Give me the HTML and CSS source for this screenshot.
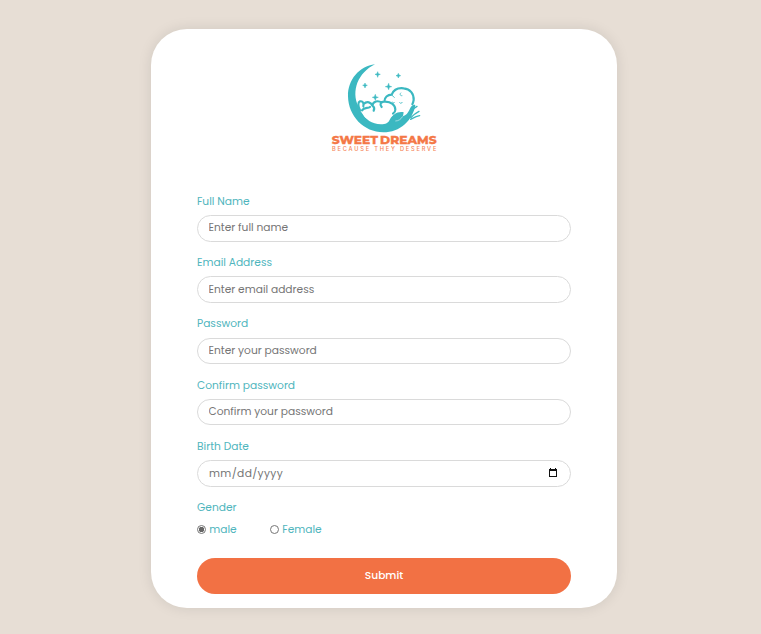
FILE: index.html
```html
<!DOCTYPE html>
<html lang="en">
<head>
<meta charset="utf-8">
<title>Sweet Dreams</title>
<link rel="stylesheet" href="styles.css">
</head>
<body>
<main class="card">
  <svg class="logo" viewBox="0 0 360 300" role="img" aria-label="Sweet Dreams">
    <path class="teal" d="M153 25C105 31 71 72 72 121C73 180 119 229 178 229C228 229 266 194 274 147C266 144 260 153 256 162C252 171 246 178 237 181L239 169C221 165 205 176 198 190C193 202 185 205 171 205C143 203 124 191 116 170L103 151C81 105 102 50 153 25Z"/>
    <path class="notch" d="M214 195C223 195 231 190 236 181"/>
    <path class="body" d="M108 163C102 151 101 139 108 136C114 134 117 139 119 144C123 133 137 136 145 149C148 138 162 133 174 139C184 134 202 138 209 149C216 160 214 170 208 176C200 182 197 187 192 192C177 201 136 197 122 183Z"/>
    <path class="line" d="M108 163C102 151 101 139 108 136C117 134 120 142 118 151M119 144C129 134 142 139 145 149M114 163C120 153 132 158 138 153M145 149C147 136 162 132 173 140M145 149C151 153 152 158 149 164M173 153C166 144 170 137 181 137C202 136 214 148 214 161C214 166 211 170 207 173M181 137C181 124 191 116 203 116C209 101 223 95 239 97C259 99 270 114 269 132C268 138 267 141 265 145"/>
    <path class="thin" d="M204 118L212 125M231 110C226 115 229 120 235 119M205 137C207 142 210 142 212 138M226 139C229 143 233 143 235 138"/>
    <path class="finger" d="M257 178C260 166 267 158 279 151M260 185C267 178 275 171 285 166M260 190C269 185 277 180 287 179"/>
    <path class="teal star" d="M161 47L163 53L169 55L163 57L161 64L159 57L153 55L159 53ZM223 52L225 57L230 59L225 61L223 66L221 61L216 59L221 57ZM123 81L125 86L130 88L125 90L123 96L121 90L116 88L121 86ZM194 82L196 90L203 92L196 94L194 101L191 94L184 92L191 90ZM154 115L156 122L163 124L156 126L154 133L151 126L145 124L151 122Z"/>
    <text class="brand" x="23" y="264" textLength="315" lengthAdjust="spacingAndGlyphs">SWEET DREAMS</text>
    <text class="tagline" x="24" y="286" textLength="313">BECAUSE THEY DESERVE</text>
  </svg>
  <form class="form">
    <div class="field"><label for="n">Full Name</label><input id="n" placeholder="Enter full name"></div>
    <div class="field"><label for="e">Email Address</label><input id="e" placeholder="Enter email address"></div>
    <div class="field"><label for="p">Password</label><input id="p" placeholder="Enter your password"></div>
    <div class="field"><label for="c">Confirm password</label><input id="c" placeholder="Confirm your password"></div>
    <div class="field">
      <label for="b">Birth Date</label>
      <div class="date">
        <input id="b" placeholder="mm/dd/yyyy">
        <svg class="calendar" viewBox="0 0 8 9"><path d="M0 1h1V0h1v1h4V0h1v1h1v8H0ZM1 3v5h6V3Z" fill="#111" fill-rule="evenodd"/></svg>
      </div>
    </div>
    <div class="gender">
      <span class="label">Gender</span>
      <div class="options">
        <label class="option"><input type="radio" name="g" checked><span>male</span></label>
        <label class="option"><input type="radio" name="g"><span>Female</span></label>
      </div>
    </div>
    <button class="submit" type="button">Submit</button>
  </form>
</main>
</body>
</html>
```
FILE: styles.css
```css
* { box-sizing: border-box; }
body {
  margin: 0;
  height: 634px;
  padding: 29px 0 0 151px;
  background: #e7ded5;
  font-family: Poppins, Inter, sans-serif;
  font-size: 10.67px;
  color: #4fb5bd;
}
.card {
  width: 466px;
  height: 579px;
  padding: 27px 46px 14px;
  border-radius: 36px;
  background: #fff;
  box-shadow: 0 0 14px rgba(0, 0, 0, .1);
}
.logo { display: block; width: 120px; height: 100px; margin: 0 auto 37px 127px; }
.teal { fill: #3bb8c1; }
.star { stroke: #3bb8c1; stroke-width: 1.5; }
.body { fill: #fff; }
.notch { fill: none; stroke: #fff; stroke-width: 1.5; }
.line { fill: none; stroke: #3bb8c1; stroke-width: 6.5; stroke-linecap: round; }
.thin { fill: none; stroke: #3bb8c1; stroke-width: 2.5; }
.finger { fill: none; stroke: #3bb8c1; stroke-width: 4; stroke-linecap: round; }
.brand {
  font: 800 33px Montserrat, Poppins, Inter, sans-serif;
  word-spacing: -4px;
  fill: #f47847;
  stroke: #f47847;
  stroke-width: .8;
}
.tagline { font: 500 17px Inter, sans-serif; fill: #f58358; }
.field { height: 61.25px; }
.field > label, .label { display: block; height: 16px; margin-bottom: 6px; padding-top: 1px; line-height: 16px; }
.field:nth-child(3) > label { padding-top: 0; }
.field input {
  display: block;
  width: 100%;
  height: 26.7px;
  padding: 0 10.5px;
  border: 1px solid #dadada;
  border-radius: 14px;
  background: #fff;
  font: 10.67px Poppins, Inter, sans-serif;
  outline: 0;
}
.field input::placeholder { color: #757575; opacity: 1; }
.date { position: relative; }
.date input { padding: 1px 11px 0; letter-spacing: .35px; }
.calendar { position: absolute; right: 14px; top: 8px; width: 8px; height: 9px; }
.gender { height: 59px; }
.options { display: flex; line-height: 16px; }
.option { display: flex; align-items: center; width: 73px; height: 16px; }
.option span { padding-top: 1px; }
.option input {
  appearance: none;
  width: 9px;
  height: 9px;
  margin: 0 3.3px 0 0;
  border: 1px solid #767676;
  border-radius: 50%;
}
.option input:checked { background: radial-gradient(circle, #666 0 2.5px, #fff 3px); }
.submit {
  display: block;
  width: 100%;
  height: 36px;
  padding: 0 0 1px;
  border: 0;
  border-radius: 18px;
  background: #f27144;
  color: #fff;
  font: 500 10.67px Poppins, Inter, sans-serif;
}
```
